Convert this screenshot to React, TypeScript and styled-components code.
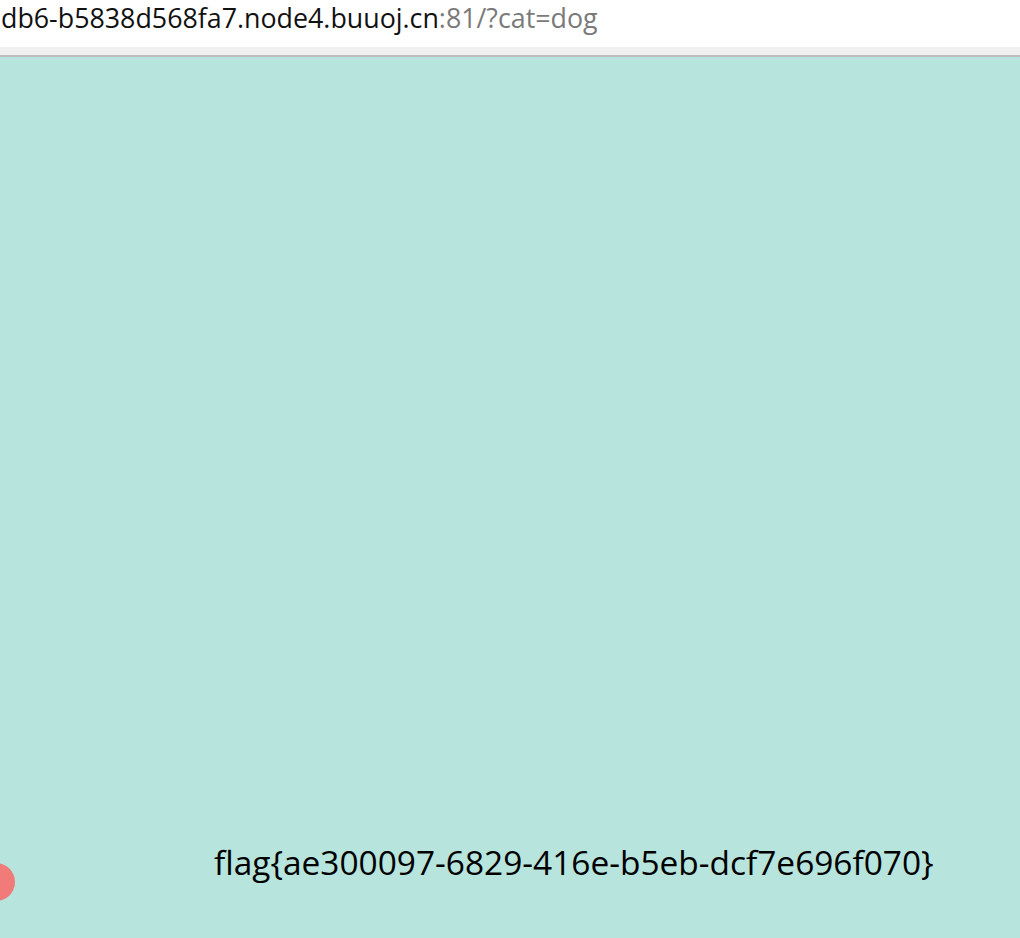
import React from "react";
import styled, { createGlobalStyle } from "styled-components";

const Global = createGlobalStyle`
  html, body { margin: 0; padding: 0; background: #b7e4dc; }
  body { font-family: "Open Sans", "Noto Sans", sans-serif; overflow: hidden; }
`;

const Page = styled.div`
  display: flex;
  flex-direction: column;
  height: 938px;
  width: 1020px;
  overflow: hidden;
`;

const AddressBar = styled.div`
  height: 47px;
  background: #ffffff;
  display: flex;
  align-items: flex-start;
  padding-left: 1px;
  box-sizing: border-box;
`;

const Url = styled.span`
  font-size: 26.8px;
  line-height: 35px;
  color: #111;
  white-space: nowrap;
`;

const UrlDim = styled.span`
  color: #7a7a7a;
`;

const Strip = styled.div`
  height: 8px;
  background: #f0f0f0;
  border-bottom: 2px solid #bdbdbd;
`;

const Stage = styled.main`
  position: relative;
  flex: 1;
  background: #b7e4dc;
  display: flex;
  flex-direction: column;
  justify-content: flex-end;
  padding: 0 0 54px 214px;
`;

const Flag = styled.div`
  font-size: 33.45px;
  line-height: 44px;
  color: #000;
  white-space: nowrap;
`;

const Ball = styled.div`
  position: absolute;
  left: -23px;
  top: 806px;
  width: 38px;
  height: 38px;
  border-radius: 50%;
  background: #f07b79;
`;

export default function App() {
  return (
    <>
      <Global />
      <Page>
        <AddressBar>
          <Url>
            db6-b5838d568fa7.node4.buuoj.cn<UrlDim>:81/?cat=dog</UrlDim>
          </Url>
        </AddressBar>
        <Strip />
        <Stage>
          <Flag>flag{"{"}ae300097-6829-416e-b5eb-dcf7e696f070{"}"}</Flag>
          <Ball />
        </Stage>
      </Page>
    </>
  );
}
